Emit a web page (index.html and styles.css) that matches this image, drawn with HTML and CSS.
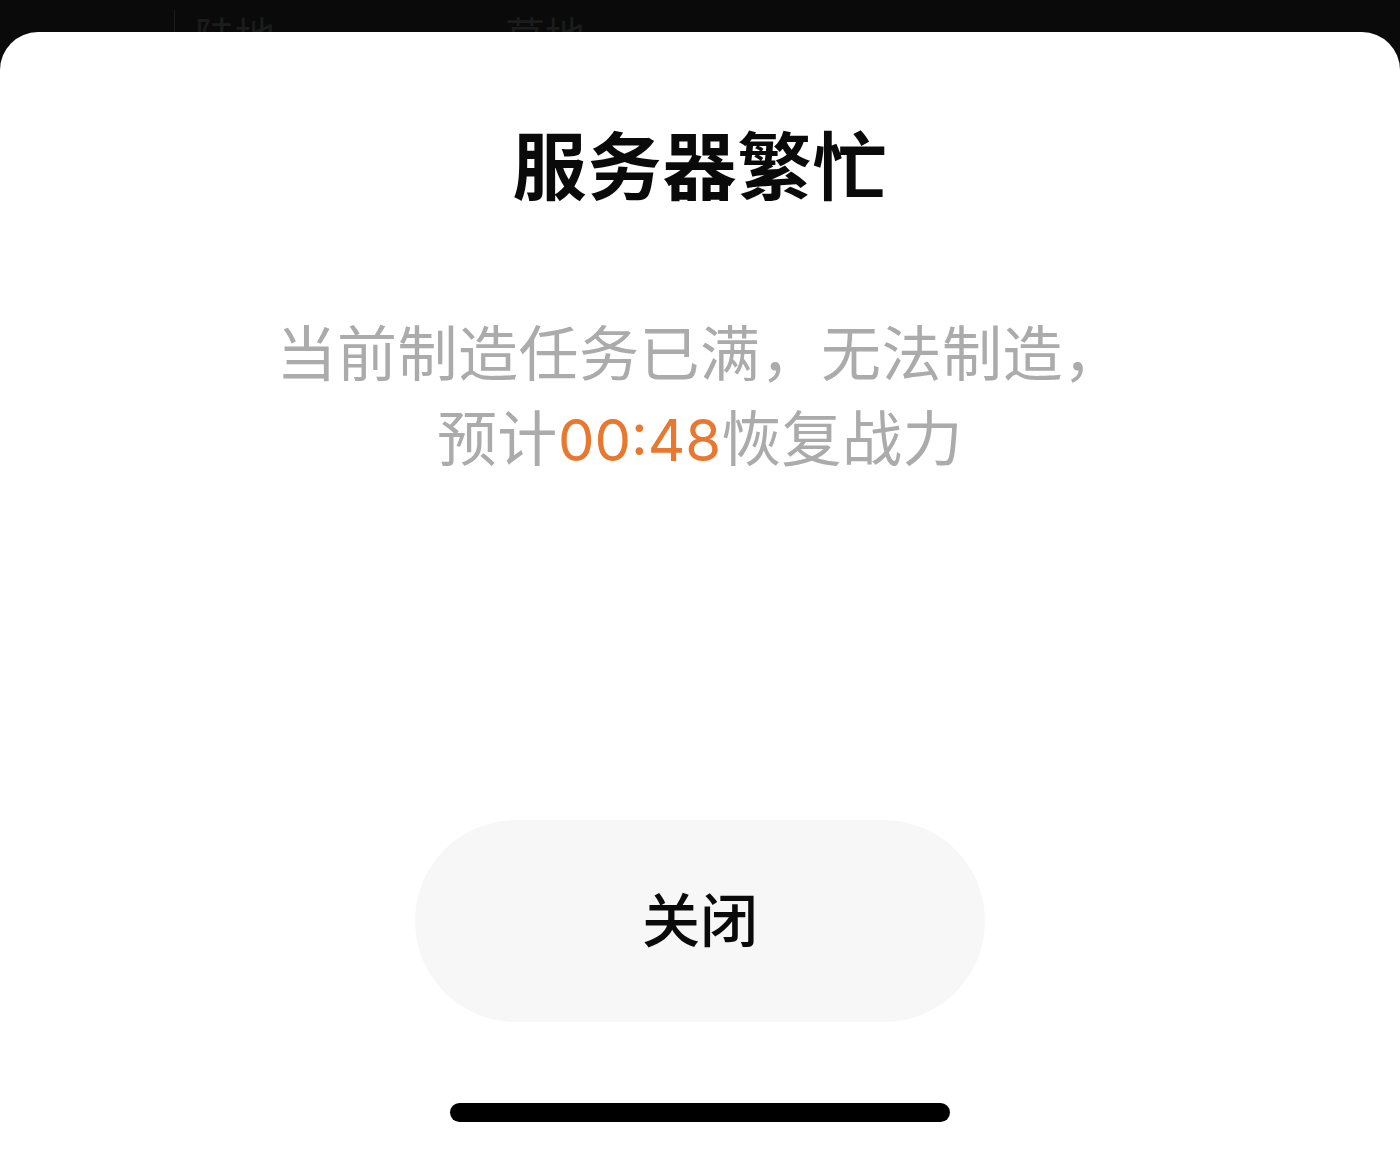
FILE: index.html
```html
<!DOCTYPE html>
<html lang="zh-CN">
<head>
<meta charset="utf-8">
<title>服务器繁忙</title>
<link rel="stylesheet" href="styles.css">
</head>
<body>
<div class="topbar">
  <span class="divider"></span>
  <span class="tab tab-a">陆地</span>
  <span class="tab tab-b">草地</span>
</div>
<div class="sheet">
  <h1 class="title">服务器繁忙</h1>
  <p class="message">当前制造任务已满，无法制造，<br>预计<span class="time">00:48</span>恢复战力</p>
  <div class="spacer"></div>
  <button class="close-btn">关闭</button>
  <div class="home-indicator"></div>
</div>
</body>
</html>
```
FILE: styles.css
```css
html, body {
  margin: 0;
  padding: 0;
  background: #0a0a0a;
  font-family: "Noto Sans CJK SC", "Noto Sans", sans-serif;
}

body {
  width: 1400px;
  height: 1151px;
  overflow: hidden;
  display: flex;
  flex-direction: column;
}

.topbar {
  height: 32px;
  flex: none;
  display: flex;
  align-items: flex-start;
  overflow: hidden;
  color: #1c1c1c;
  font-size: 40px;
  line-height: 40px;
}

.divider {
  width: 1px;
  height: 32px;
  background: #1c1c1c;
  margin: 10px 0 0 174px;
}

.tab {
  padding-top: 14px;
}

.tab-a {
  margin-left: 20px;
}

.tab-b {
  margin-left: 230px;
}

.sheet {
  flex: 1;
  background: #ffffff;
  border-radius: 38px 38px 0 0;
  display: flex;
  flex-direction: column;
  align-items: center;
}

.title {
  margin: 93px 0 0;
  font-size: 74px;
  line-height: 74px;
  font-weight: 700;
  color: #0a0a0a;
  letter-spacing: 1px;
}

.message {
  margin: 108px 0 0;
  font-size: 60px;
  line-height: 85px;
  font-weight: 400;
  color: #ababab;
  text-align: center;
  letter-spacing: 0.5px;
}

.time {
  color: #e8782f;
  font-family: "Inter", "Noto Sans CJK SC", sans-serif;
  font-size: 58px;
  letter-spacing: 0;
}

.spacer {
  flex: 1;
}

.close-btn {
  width: 570px;
  height: 202px;
  border: none;
  border-radius: 101px;
  background: #f7f7f7;
  color: #0a0a0a;
  font-family: inherit;
  font-size: 58px;
  line-height: 58px;
  font-weight: 500;
  padding: 0 0 8px;
  margin: 0;
}

.home-indicator {
  width: 500px;
  height: 19px;
  border-radius: 10px;
  background: #000000;
  margin: 81px 0 29px;
}
```
